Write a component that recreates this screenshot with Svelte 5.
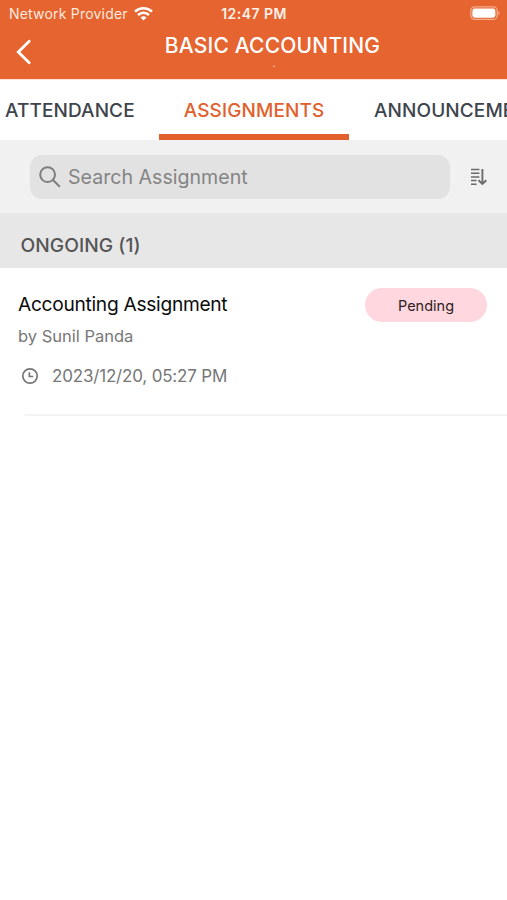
<script>
  let search = $state("");
  let activeTab = $state("assignments");

  const tabs = [
    { id: "attendance", label: "ATTENDANCE" },
    { id: "assignments", label: "ASSIGNMENTS" },
    { id: "announcements", label: "ANNOUNCEMENTS" },
  ];

  const assignments = [
    {
      title: "Accounting Assignment",
      author: "Sunil Panda",
      due: "2023/12/20, 05:27 PM",
      status: "Pending",
    },
  ];
</script>

<div class="screen">
  <header>
    <div class="status-bar">
      <div class="carrier">
        <span>Network Provider</span>
        <svg class="wifi" width="19" height="14" viewBox="0 0 19 14">
          <path d="M1 4.7a12.3 12.3 0 0 1 17 0" />
          <path d="M4 8a8 8 0 0 1 11 0" />
          <path class="dot" d="M9.5 13.6 6.5 10.6a4.3 4.3 0 0 1 6 0z" />
        </svg>
      </div>
      <span class="time">12:47 PM</span>
      <svg class="battery" width="31" height="15" viewBox="0 0 31 15">
        <rect class="shell" x="0.8" y="0.8" width="26.4" height="12.6" rx="4" />
        <rect class="level" x="2.4" y="2.5" width="23" height="9.2" rx="2.4" />
        <path class="cap" d="M28.4 5.2c1.9.5 1.9 3.3 0 3.8z" />
      </svg>
    </div>
    <div class="nav-bar">
      <button class="back" aria-label="Back">
        <svg width="16" height="26" viewBox="0 0 16 26">
          <path d="M13.2 2.3 2.3 13l10.9 10.7" />
        </svg>
      </button>
      <div class="heading">
        <h1>BASIC ACCOUNTING</h1>
        <span class="subtitle">.</span>
      </div>
    </div>
  </header>

  <nav>
    {#each tabs as tab}
      <button
        class="tab {tab.id}"
        class:active={activeTab === tab.id}
        onclick={() => (activeTab = tab.id)}
      >
        <span>{tab.label}</span>
      </button>
    {/each}
  </nav>

  <div class="toolbar">
    <label class="search">
      <svg width="22" height="22" viewBox="0 0 22 22">
        <circle cx="8.6" cy="8.6" r="7.4" />
        <path d="m14 14 6.3 6.3" />
      </svg>
      <input placeholder="Search Assignment" bind:value={search} />
    </label>
    <button class="sort" aria-label="Sort">
      <svg width="18" height="18" viewBox="0 0 18 18">
        <path d="M1 1.6h8.4M1 5.3h8.4M1 9h8.4M1 12.6h5.6M1 16.2h5.6" />
        <path class="arrow" d="M12.4 1v14.8M8.5 12.2l3.9 3.8 3.9-3.8" />
      </svg>
    </button>
  </div>

  <h2><span>ONGOING ({assignments.length})</span></h2>

  {#each assignments as item}
    <article>
      <div class="row">
        <div class="info">
          <h3><span>{item.title}</span></h3>
          <p class="author"><span>by {item.author}</span></p>
        </div>
        <span class="badge"><span>{item.status}</span></span>
      </div>
      <div class="due">
        <svg width="18" height="18" viewBox="0 0 18 18">
          <circle cx="9" cy="9" r="7.2" />
          <path d="M8.4 5.2v4.3h3.8" />
        </svg>
        <span>{item.due}</span>
      </div>
    </article>
  {/each}
</div>

<style>
  :global(body) {
    margin: 0;
    background: #fff;
  }

  .screen {
    width: 100%;
    height: 900px;
    overflow: hidden;
    background: #fff;
    font-family: Inter, "Liberation Sans", sans-serif;
    white-space: nowrap;
  }

  button {
    padding: 0;
    border: 0;
    background: none;
    font: inherit;
    color: inherit;
  }

  h1,
  h2,
  h3,
  p {
    margin: 0;
    font-weight: 400;
  }

  svg {
    display: block;
    flex: none;
    fill: none;
    stroke: currentColor;
  }

  header {
    box-sizing: border-box;
    height: 79px;
    background: #e56430;
    color: #fff;
  }

  .status-bar {
    display: grid;
    grid-template-columns: 1fr auto 1fr;
    align-items: center;
    height: 27px;
    padding: 0 6px 0 9px;
    font-size: 14px;
  }

  .carrier {
    display: flex;
    align-items: center;
    gap: 6px;
    color: #ffe9df;
    letter-spacing: 0.2px;
  }

  .wifi {
    stroke-width: 2.5;
    color: #fff;
  }

  .wifi .dot {
    fill: currentColor;
    stroke: none;
  }

  .time {
    margin-right: 2px;
    font-weight: 600;
    letter-spacing: 0.45px;
    color: #fff1ea;
  }

  .battery {
    justify-self: end;
  }

  .shell {
    stroke: #f3ac8d;
    stroke-width: 1.3;
  }

  .level {
    fill: #fff;
    stroke: none;
  }

  .cap {
    fill: #f3ac8d;
    stroke: none;
  }

  .nav-bar {
    display: flex;
    height: 52px;
  }

  .back {
    width: 38px;
    height: 50px;
    padding-left: 16px;
  }

  .back svg {
    stroke-width: 2.8;
    stroke-linecap: round;
  }

  .heading {
    display: flex;
    flex: 1;
    flex-direction: column;
    align-items: center;
    padding-top: 6px;
  }

  h1 {
    font-size: 21px;
    font-weight: 500;
    letter-spacing: 0.2px;
    line-height: 26px;
  }

  .subtitle {
    padding-left: 3px;
    font-size: 8px;
    font-weight: 700;
    line-height: 10px;
  }

  nav {
    display: flex;
    height: 61px;
    border-top: 1px solid #fbe3d8;
    box-sizing: border-box;
    color: #3d444b;
    font-size: 19px;
    font-weight: 500;
    letter-spacing: 0.1px;
  }

  .tab {
    box-sizing: border-box;
    flex: none;
    height: 60px;
    border-bottom: 6px solid transparent;
    padding-top: 6px;
    letter-spacing: inherit;
    text-align: left;
  }

  .attendance {
    width: 159px;
    padding-left: 5px;
  }

  .assignments {
    width: 190px;
    text-align: center;
  }

  .announcements {
    padding-left: 25px;
  }

  .active {
    border-color: #e2602b;
    color: #e2602b;
  }

  .toolbar {
    display: flex;
    align-items: center;
    height: 73px;
    padding: 0 20px 0 30px;
    background: #f1f1f1;
  }

  .search {
    display: flex;
    flex: none;
    align-items: center;
    gap: 7px;
    box-sizing: border-box;
    width: 420px;
    height: 44px;
    padding-left: 9px;
    border-radius: 12px;
    background: #e2e2e2;
    color: #7e7e7e;
  }

  .search svg {
    stroke-width: 2;
    stroke-linecap: round;
  }

  input {
    flex: 1;
    min-width: 0;
    padding: 0;
    border: 0;
    outline: 0;
    background: none;
    color: #555;
    font: 19.6px Inter, "Liberation Sans", sans-serif;
  }

  input::placeholder {
    color: #848484;
    opacity: 1;
  }

  .sort {
    margin-left: 20px;
    color: #6b6b6b;
  }

  .sort svg {
    stroke-width: 1.5;
  }

  .sort .arrow {
    stroke-width: 1.9;
  }

  h2 {
    display: flex;
    align-items: center;
    box-sizing: border-box;
    height: 55px;
    padding: 8px 0 0 20.5px;
    background: #e7e7e7;
    color: #555;
    font-size: 19.2px;
    font-weight: 500;
    letter-spacing: 0.05px;
  }

  article {
    box-sizing: border-box;
    height: 148px;
    padding: 20px 20px 0 18px;
    border-bottom: 2px solid;
    border-image: linear-gradient(to right, #fff 25px, #f3f3f3 28px) 2;
  }

  .row {
    display: flex;
    justify-content: space-between;
    align-items: flex-start;
  }

  h3 {
    color: #0c0c0c;
    font-size: 19.2px;
    letter-spacing: -0.3px;
    line-height: 33px;
  }

  .author {
    color: #777;
    font-size: 16.5px;
    line-height: 31px;
  }

  .badge {
    display: flex;
    align-items: center;
    justify-content: center;
    width: 122px;
    height: 34px;
    border-radius: 17px;
    background: #ffd7de;
    color: #2f2023;
    font-size: 14.5px;
  }

  .due {
    display: flex;
    align-items: center;
    gap: 13px;
    height: 32px;
    margin-top: 8px;
    padding-left: 3px;
    color: #777;
    font-size: 17px;
    letter-spacing: -0.18px;
  }

  .due svg {
    stroke-width: 1.7;
  }
</style>
